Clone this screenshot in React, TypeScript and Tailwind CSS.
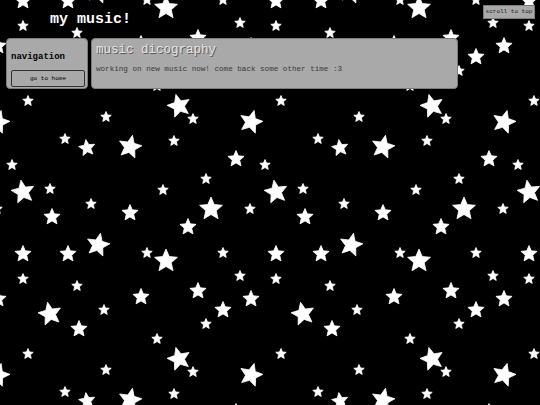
import React from "react";

type S = [number, number, number, number];
// x, y, outer radius, rotation
const STARS: S[] = [
  [28, 101, 5.5, 0],
  [-2, 122, 12, 15],
  [106, 117, 5.5, 0],
  [65, 139, 5.5, 0],
  [87, 148, 8.5, -8],
  [130, 147, 12, 12],
  [12, 165, 5.5, 0],
  [23, 192, 12, -10],
  [50, 189, 5.5, 0],
  [91, 204, 5.5, 0],
  [52, 217, 8.5, 0],
  [130, 213, 8.5, 0],
  [250, 209, 5.5, 0],
  [179, 106, 12, -15],
  [193, 119, 5.5, 0],
  [174, 141, 5.5, 0],
  [236, 159, 8.5, 0],
  [206, 179, 5.5, 0],
  [163, 190, 5.5, 0],
  [211, 209, 12, 0],
  [188, 227, 8.5, 0],
  [98, 245, 12, 12],
  [23, 254, 8.5, 0],
  [68, 254, 8.5, 0],
  [23, 279, 5.5, 0],
  [77, 286, 5.5, 0],
  [251, 299, 8.5, 0],
  [50, 314, 12, -12],
  [104, 310, 5.5, 0],
  [79, 329, 8.5, 0],
  [147, 253, 5.5, 0],
  [166, 261, 12, 0],
  [223, 253, 5.5, 0],
  [240, 276, 5.5, 0],
  [198, 291, 8.5, 0],
  [141, 297, 8.5, 0],
  [223, 310, 8.5, 0],
  [206, 324, 5.5, 0],
  [157, 339, 5.5, 0],
];

const T = 253;

function starPts(cx: number, cy: number, R: number, rot: number) {
  const r = R * 0.46;
  const pts: string[] = [];
  for (let i = 0; i < 10; i++) {
    const rad = i % 2 === 0 ? R : r;
    const a = ((-90 + rot + i * 36) * Math.PI) / 180;
    pts.push(`${(cx + rad * Math.cos(a)).toFixed(2)},${(cy + rad * Math.sin(a)).toFixed(2)}`);
  }
  return pts.join(" ");
}

function Stars() {
  const items: React.ReactNode[] = [];
  for (let i = -1; i <= 2; i++) {
    for (let j = -1; j <= 1; j++) {
      STARS.forEach(([x, y, R, rot], k) => {
        const cx = x + i * T;
        const cy = y + j * T;
        if (cx < -15 || cx > 560 || cy < -15 || cy > 420) return;
        items.push(
          <polygon
            key={`${i}-${j}-${k}`}
            points={starPts(cx, cy, R, rot)}
            fill="#ffffff"
            stroke="#ffffff"
            strokeWidth={0.8}
            strokeLinejoin="round"
          />
        );
      });
    }
  }
  return (
    <svg className="absolute inset-0 w-full h-full" width="540" height="405">
      {items}
    </svg>
  );
}

export default function App() {
  return (
    <div
      className="relative w-[540px] h-[405px] overflow-hidden bg-black"
      style={{ fontFamily: '"Liberation Mono", "Courier New", monospace' }}
    >
      <Stars />
      <div className="relative flex flex-col">
        <div className="h-[38px] flex items-center pl-[50px]">
          <h1 className="text-[15px] font-bold text-white leading-none">my music!</h1>
        </div>
        <div className="flex pl-[6px] gap-[3px]">
          <div className="w-[82px] h-[51px] bg-[#a9a9a9] border border-[#7c7c7c] rounded-[4px] px-[4px] pt-[14px]">
            <div className="text-[9px] font-bold text-black leading-none">navigation</div>
            <button className="mt-[8px] w-[74px] h-[17px] border border-[#333] rounded-[2px] bg-[#a9a9a9] text-[6px] text-black leading-none flex items-center justify-center">
              go to home
            </button>
          </div>
          <div className="w-[367px] h-[51px] bg-[#a9a9a9] border border-[#7c7c7c] rounded-[4px] px-[4px] pt-[3px]">
            <div className="text-[12.5px] leading-[16px] text-[#e4e4e4] [text-shadow:1px_1px_0_#5a5a5a]">
              music dicography
            </div>
            <p className="mt-[8px] text-[7.6px] leading-none text-[#3a3a3a]">
              working on new music now! come back some other time :3
            </p>
          </div>
        </div>
      </div>
      <button className="absolute top-[5px] left-[483px] w-[52px] h-[14px] bg-[#a9a9a9] border border-[#7c7c7c] text-[6px] text-[#222] leading-none flex items-center justify-center">
        scroll to top
      </button>
    </div>
  );
}
